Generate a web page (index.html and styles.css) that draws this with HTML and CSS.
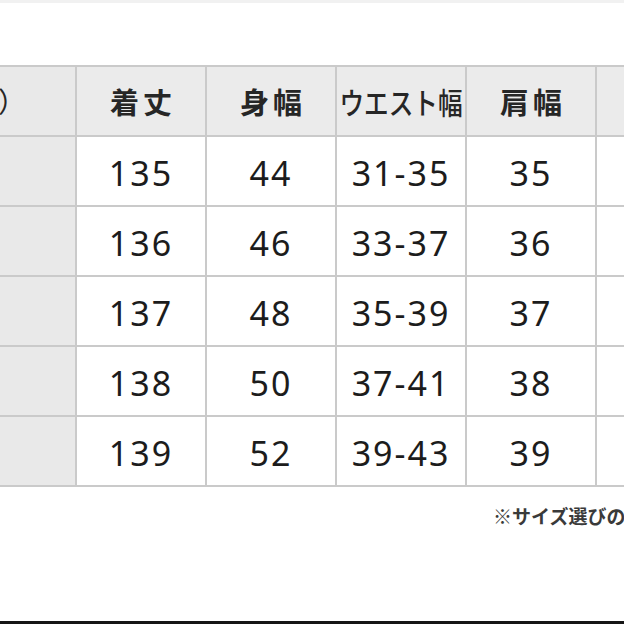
FILE: index.html
```html
<!DOCTYPE html>
<html lang="ja">
<head>
<meta charset="utf-8">
<link rel="stylesheet" href="styles.css">
</head>
<body>
<div class="page">
  <div class="topstrip"></div>
  <div class="chart">
    <div class="cell head first"><span class="unit">サイズ（cm）</span></div>
    <div class="cell head">着丈</div>
    <div class="cell head">身幅</div>
    <div class="cell head"><span class="narrow">ウエスト幅</span></div>
    <div class="cell head">肩幅</div>
    <div class="cell head"></div>

    <div class="cell first"></div>
    <div class="cell num">135</div>
    <div class="cell num">44</div>
    <div class="cell num">31-35</div>
    <div class="cell num">35</div>
    <div class="cell num"></div>

    <div class="cell first"></div>
    <div class="cell num">136</div>
    <div class="cell num">46</div>
    <div class="cell num">33-37</div>
    <div class="cell num">36</div>
    <div class="cell num"></div>

    <div class="cell first"></div>
    <div class="cell num">137</div>
    <div class="cell num">48</div>
    <div class="cell num">35-39</div>
    <div class="cell num">37</div>
    <div class="cell num"></div>

    <div class="cell first"></div>
    <div class="cell num">138</div>
    <div class="cell num">50</div>
    <div class="cell num">37-41</div>
    <div class="cell num">38</div>
    <div class="cell num"></div>

    <div class="cell first"></div>
    <div class="cell num">139</div>
    <div class="cell num">52</div>
    <div class="cell num">39-43</div>
    <div class="cell num">39</div>
    <div class="cell num"></div>
  </div>
  <p class="note">※サイズ選びのご参考にしてください。</p>
  <div class="bottomline"></div>
</div>
</body>
</html>
```
FILE: styles.css
```css
html, body {
  margin: 0;
  padding: 0;
  background: #ffffff;
  overflow: hidden;
}

.page {
  width: 624px;
  height: 624px;
  display: flex;
  flex-direction: column;
  overflow: hidden;
  font-family: "Noto Sans CJK JP", "Noto Sans", sans-serif;
  color: #1c1c1c;
}

.topstrip {
  height: 3px;
  background: #f1f1f1;
  flex: none;
}

.chart {
  flex: none;
  margin-top: 62px;
  margin-left: -55px;
  width: 782px;
  display: grid;
  grid-template-columns: repeat(6, 128px);
  grid-template-rows: 68px repeat(5, 68px);
  gap: 2px;
  padding: 2px;
  background: #cacaca;
}

.cell {
  background: #ffffff;
  display: flex;
  align-items: center;
  justify-content: center;
  overflow: hidden;
}

.head {
  background: #ebebeb;
  font-family: "Noto Sans CJK JP", sans-serif;
  font-weight: 700;
  font-size: 29px;
  letter-spacing: 4px;
  padding-left: 4px;
  color: #262626;
}

.first {
  background: #e9e9e9;
}

.head.first {
  justify-content: flex-end;
  padding-right: 49px;
  letter-spacing: 0;
  font-size: 28px;
  font-weight: 400;
}

.unit {
  white-space: nowrap;
}

.narrow {
  display: inline-block;
  white-space: nowrap;
  font-size: 30px;
  font-weight: 500;
  letter-spacing: 0;
  transform: scaleX(0.82);
  margin-left: -4px;
}

.num {
  font-family: "Noto Sans", sans-serif;
  font-size: 34px;
  letter-spacing: 2px;
  padding-top: 4px;
}

.note {
  margin: 15px 0 0 493px;
  white-space: nowrap;
  font-family: "Noto Sans CJK JP", sans-serif;
  font-weight: 700;
  font-size: 19px;
  color: #3a3a3a;
}

.bottomline {
  margin-top: auto;
  height: 3px;
  background: #161616;
  flex: none;
}
```
